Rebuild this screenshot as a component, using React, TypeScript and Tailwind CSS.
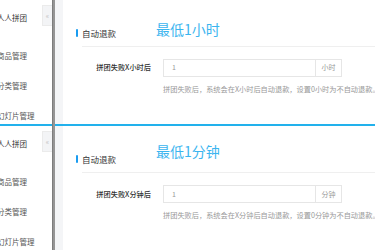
const FONT = { fontFamily: '"Noto Sans CJK SC", "Noto Sans", sans-serif' };

type PanelProps = {
  unit: string;
  headingTop: string;
};

const Sidebar = () => {
  return (
    <div className="flex h-[126px] bg-white overflow-hidden">
      {/* menu */}
      <div className="flex-1 flex flex-col whitespace-nowrap">
        <div className="h-[36px] leading-[36px] ml-[-3px] text-[7.5px] text-[#333]">人人拼团</div>
        <div className="mt-[5px] h-[30px] leading-[30px] ml-[-3px] text-[7.5px] text-[#555]">商品管理</div>
        <div className="h-[30px] leading-[30px] ml-[-3px] text-[7.5px] text-[#555]">分类管理</div>
        <div className="h-[30px] leading-[30px] ml-[-3px] text-[7.5px] text-[#555]">幻灯片管理</div>
      </div>
      {/* collapse button */}
      <div className="w-[10px] h-[21px] mt-[5px] bg-[#f3f4f6] border border-r-0 border-[#ebebeb] flex items-center justify-center text-[7px] leading-none text-[#c2c2c2]">
        «
      </div>
    </div>
  );
};

const Content = ({ unit, headingTop }: PanelProps) => {
  return (
    <div className="flex h-[126px] overflow-hidden">
      <div className="w-[8px] shrink-0 bg-[#f4f5f7]" />
      <div className="flex-1 min-w-0 bg-white flex flex-col">
        {/* section header */}
        <div className="flex items-start pt-[21px] pl-[13px]">
          <div className="w-[2px] h-[8px] mt-[8px] bg-[#1a9cf0] rounded-full" />
          <div className="ml-[4px] mt-[7.5px] text-[8.5px] leading-[9px] text-[#333] whitespace-nowrap">自动退款</div>
          <div className={`ml-[40px] text-[14px] leading-[14px] text-[#3bb5ef] whitespace-nowrap ${headingTop}`}>
            最低1{unit}
          </div>
        </div>
        <div className="mt-[8px] ml-[19px] h-px bg-[#efefef]" />

        {/* form row */}
        <div className="mt-[12px] flex items-center">
          <div className="w-[88px] shrink-0 text-right text-[7.2px] font-medium text-[#333] whitespace-nowrap">
            拼团失败X{unit}后
          </div>
          <div className="ml-[12px] flex h-[18px] shrink-0">
            <div className="w-[153px] border border-[#e6e6e6] flex items-center pl-[8px] text-[7px] text-[#999]">1</div>
            <div className="w-[26px] border border-l-0 border-[#e6e6e6] bg-white flex items-center justify-center text-[7px] text-[#999]">
              {unit}
            </div>
          </div>
        </div>

        {/* help */}
        <div className="mt-[8px] ml-[100px] text-[7.2px] leading-[8px] text-[#999] whitespace-nowrap">
          拼团失败后，系统会在X{unit}后自动退款，设置0{unit}为不自动退款。
        </div>
      </div>
    </div>
  );
};

export default function App() {
  return (
    <div className="w-[375px] h-[250px] overflow-hidden flex bg-white" style={FONT}>
      {/* left: sidebar halves */}
      <div className="w-[52px] shrink-0 flex flex-col">
        <Sidebar />
        <div className="h-[3px] bg-[#22b1ec]" />
        <Sidebar />
      </div>

      {/* divider bar */}
      <div className="w-[3px] shrink-0 bg-[#959595] border-l border-[#7d7d7d]" />

      {/* right: content halves */}
      <div className="flex-1 min-w-0 flex flex-col">
        <Content unit="小时" headingTop="mt-[1px]" />
        <div className="h-[3px] bg-[#22b1ec]" />
        <Content unit="分钟" headingTop="mt-[-3px]" />
      </div>
    </div>
  );
}
